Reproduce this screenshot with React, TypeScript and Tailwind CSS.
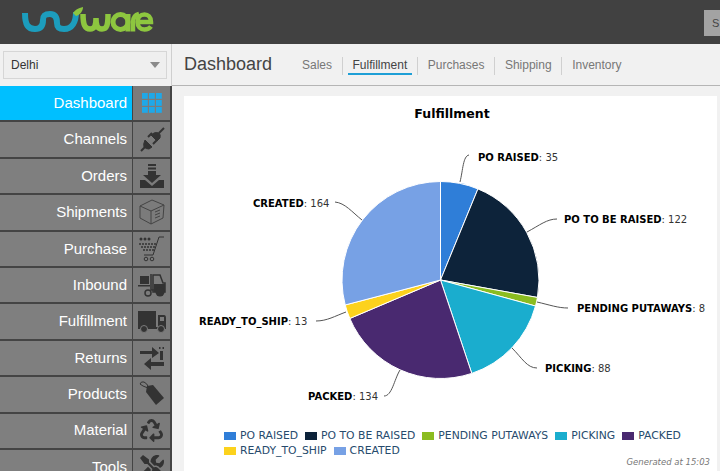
import type { ReactNode } from 'react';
import { FaRecycle, FaTools } from 'react-icons/fa';

const slices = [
  { name: 'PO RAISED', value: 35, color: '#2f7ed8' },
  { name: 'PO TO BE RAISED', value: 122, color: '#0d233a' },
  { name: 'PENDING PUTAWAYS', value: 8, color: '#8bbc21' },
  { name: 'PICKING', value: 88, color: '#1aadce' },
  { name: 'PACKED', value: 134, color: '#492970' },
  { name: 'READY_TO_SHIP', value: 13, color: '#fcd21d' },
  { name: 'CREATED', value: 164, color: '#77a1e5' },
];

// label position + leader line, in page coordinates
const labels = [
  { name: 'PO RAISED', value: 35, x: 478, y: 161, line: 'M460 182 C463 170 463 156 469 155' },
  { name: 'PO TO BE RAISED', value: 122, x: 564, y: 223, line: 'M527 232 C540 225 547 219 557 219' },
  { name: 'PENDING PUTAWAYS', value: 8, x: 577, y: 312, line: 'M537 302 C550 305 558 308 568 308' },
  { name: 'PICKING', value: 88, x: 545, y: 372, line: 'M512 348 C522 358 527 368 537 368' },
  { name: 'PACKED', value: 134, x: 308, y: 400, line: 'M400 370 C394 380 392 396 384 396' },
  { name: 'READY_TO_SHIP', value: 13, x: 199, y: 325, line: 'M346 312 C335 316 327 321 316 321' },
  { name: 'CREATED', value: 164, x: 253, y: 207, line: 'M362 220 C352 212 345 203 335 202' },
];

function slicePath(start: number, end: number) {
  const cx = 440.5;
  const cy = 280;
  const r = 98.5;
  const a0 = (start - 0.25) * Math.PI * 2;
  const a1 = (end - 0.25) * Math.PI * 2;
  const large = end - start > 0.5 ? 1 : 0;
  return `M${cx} ${cy} L${cx + r * Math.cos(a0)} ${cy + r * Math.sin(a0)} A${r} ${r} 0 ${large} 1 ${cx + r * Math.cos(a1)} ${cy + r * Math.sin(a1)} Z`;
}

function PieChart() {
  const total = slices.reduce((sum, s) => sum + s.value, 0);
  let acc = 0;
  return (
    <svg viewBox="184 126 533 302" className="h-[302px] w-[533px] shrink-0">
      {slices.map((s) => {
        const start = acc / total;
        acc += s.value;
        return <path key={s.name} d={slicePath(start, acc / total)} fill={s.color} stroke="#fff" strokeWidth="1" />;
      })}
      {labels.map((l) => (
        <g key={l.name}>
          <path d={l.line} fill="none" stroke="#555" strokeWidth="1" />
          <text x={l.x} y={l.y} fontSize="10" fontFamily="'DejaVu Sans', sans-serif" fill="#333">
            <tspan fontWeight="700" fill="#000">{l.name}</tspan>: {l.value}
          </text>
        </g>
      ))}
    </svg>
  );
}

const ic = 'h-[26px] w-[26px] text-[#333]';

const icons: Record<string, ReactNode> = {
  Dashboard: (
    <svg viewBox="0 0 20 20" className="h-5 w-5" fill="#1fa8e8">
      {[0, 7, 14].map((y) =>
        [0, 7, 14].map((x) => <rect key={`${x}-${y}`} x={x} y={y} width="5.8" height="5.8" />),
      )}
    </svg>
  ),
  Channels: (
    <svg viewBox="0 0 26 26" className={ic} fill="currentColor" stroke="currentColor">
      <path d="M2 24 L8 18" strokeWidth="2" />
      <path d="M6 13 L13 20 L10 22 Q7 22 5 20 Q4 17 6 13Z" />
      <path d="M12 8 L18 14 L21 11 Q22 8 20 6 Q17 5 15 6Z" />
      <path d="M9 10 L13 6 M14 17 L18 13" strokeWidth="2" />
      <path d="M20 6 L25 1" strokeWidth="2" />
    </svg>
  ),
  Orders: (
    <svg viewBox="0 0 26 26" className={ic} fill="currentColor">
      <rect x="9" y="1" width="8" height="2" />
      <rect x="9" y="4.5" width="8" height="2" />
      <path d="M9 8h8v4h5l-9 8-9-8h5z" />
      <path d="M1 17h5l7 6 7-6h5v8H1z" />
    </svg>
  ),
  Shipments: (
    <svg viewBox="0 0 26 26" className="h-[26px] w-[26px] text-[#444]" fill="none" stroke="currentColor" strokeWidth="1">
      <path d="M13 1 L25 6 L24 19 L12 25 L1 19 L1 7 Z" />
      <path d="M1 7 L12 12 L25 6 M12 12 L12 25" />
      <path d="M16 13 L21 11 M16 16 L21 14 M16 19 L21 17" />
    </svg>
  ),
  Purchase: (
    <svg viewBox="0 0 26 26" className={ic} fill="currentColor">
      {[2, 6, 10].map((x) => <circle key={x} cx={x} cy="3" r="1.5" />)}
      {[1, 4, 7, 10, 13, 16].map((x) => <circle key={x} cx={x} cy="8" r="1" />)}
      {[3, 6, 9, 12, 15].map((x) => <circle key={x} cx={x} cy="11" r="1" />)}
      {[5, 8, 11, 14].map((x) => <circle key={x} cx={x} cy="14" r="1" />)}
      <path d="M25 1 H20 L14 19 H5" fill="none" stroke="currentColor" strokeWidth="1" />
      <circle cx="7" cy="23" r="1.8" fill="none" stroke="currentColor" />
      <circle cx="13" cy="23" r="1.8" fill="none" stroke="currentColor" />
    </svg>
  ),
  Inbound: (
    <svg viewBox="0 0 28 26" className="h-[26px] w-7 text-[#333]" fill="currentColor">
      <rect x="2" y="4" width="9" height="8" />
      <rect x="0" y="13" width="12" height="1.5" />
      <path d="M13 2 V18 H17" fill="none" stroke="currentColor" strokeWidth="1.5" />
      <path d="M15 3 H22 L25 11 H27 V20 H15Z" fill="none" stroke="currentColor" strokeWidth="1.5" />
      <path d="M16 12 H27 V20 H16Z" />
      <circle cx="10" cy="21" r="3" fill="none" stroke="currentColor" strokeWidth="1.5" />
      <circle cx="22" cy="20" r="4.5" />
    </svg>
  ),
  Fulfillment: (
    <svg viewBox="0 0 28 24" className="h-6 w-7 text-[#333]" fill="currentColor">
      <rect x="0" y="1" width="18" height="16" />
      <path d="M20 5 H26 Q28 5 28 8 V17 H20Z" />
      <rect x="22" y="7" width="4" height="4" fill="#7b7b7b" />
      <rect x="0" y="17" width="28" height="2" />
      <circle cx="6" cy="19" r="3.5" stroke="#7b7b7b" />
      <circle cx="23" cy="19" r="3.5" stroke="#7b7b7b" />
    </svg>
  ),
  Returns: (
    <svg viewBox="0 0 26 26" className={ic} fill="currentColor">
      <path d="M1 6 H13 V2 L20 8 L13 13 V9 H1Z" />
      <path d="M25 17 H12 V13 L5 19 L12 25 V21 H25Z" />
      <rect x="21" y="6" width="3" height="9" />
      <rect x="20" y="2" width="1.5" height="2" />
      <rect x="23.5" y="2" width="1.5" height="2" />
    </svg>
  ),
  Products: (
    <svg viewBox="0 0 26 26" className={ic} fill="currentColor">
      <path d="M8 5 L14 4 L25 17 L17 24 L7 11 Z" />
      <path d="M9 7 Q3 5 1 3 Q2 0 5 1 Q8 2 10 7" fill="none" stroke="currentColor" strokeWidth="1" />
    </svg>
  ),
  Material: <FaRecycle className="h-[23px] w-[23px] text-[#333]" />,
  Tools: <FaTools className="h-6 w-6 text-[#333]" />,
};

const navItems = ['Dashboard', 'Channels', 'Orders', 'Shipments', 'Purchase', 'Inbound', 'Fulfillment', 'Returns', 'Products', 'Material', 'Tools'];
const tabs = ['Sales', 'Fulfillment', 'Purchases', 'Shipping', 'Inventory'];

function Logo() {
  return (
    <svg viewBox="20 6 136 28" className="h-7 w-[136px]" fill="none" strokeWidth="6">
      <path d="M25 13 C25 25 28 29 35 29 C41 29 43 25 43 20 C43 15 46 14 50 14 C56 14 57 19 57 23 C57 27 59 29 64 29 C72 29 76 22 76 12" stroke="#1c9dbd" />
      <path d="M73 13 C75 10 78 8 83 7 C83 11 80 15 76 16Z" fill="#8dc63f" strokeWidth="0" />
      <path d="M83 14 C83 25 85 29 90 29 C95 29 96 25 96 18 C96 25 97 29 102 29 C107 29 108 25 108 14" stroke="#8dc63f" strokeWidth="5.5" />
      <circle cx="120.5" cy="22" r="7.5" stroke="#8dc63f" strokeWidth="5" />
      <path d="M128 14 V31.5" stroke="#8dc63f" strokeWidth="5" />
      <path d="M133 31.5 V22 C133 17 135 15 139 14" stroke="#8dc63f" strokeWidth="4.5" />
      <path d="M137.5 22 H151 C151 17 148 14.5 144.5 14.5 C140.5 14.5 137.5 17.5 137.5 22 C137.5 26.5 140.5 29.5 144.5 29.5 C147 29.5 149.5 28.5 151 26.5" stroke="#8dc63f" strokeWidth="4.5" />
    </svg>
  );
}

export default function App() {
  return (
    <div className="flex h-[471px] w-[720px] flex-col overflow-hidden bg-[#f1f1f1] font-['Liberation_Sans',sans-serif]">
      <header className="flex h-11 shrink-0 items-start justify-between bg-[#414141]">
        <div className="pl-5 pt-[6px]">
          <Logo />
        </div>
        <div className="mt-[10px] flex h-[26px] w-4 items-center bg-[#a3a3a3] pl-2 text-[11px] leading-none text-[#444]">S</div>
      </header>

      <div className="flex min-h-0 flex-1">
        <aside className="flex w-[172px] shrink-0 flex-col">
          <div className="flex h-[42px] shrink-0 items-center border-r border-[#cfcfcf] pl-[3px]">
            <div className="flex h-7 w-[164px] items-center justify-between border border-[#d6d6d6] bg-[#efefef] pl-[7px] pr-[6px] text-xs text-[#333]">
              <span>Delhi</span>
              <span className="h-0 w-0 border-x-[5px] border-t-[6px] border-x-transparent border-t-[#8a8a8a]" />
            </div>
          </div>
          <nav className="flex flex-col">
            {navItems.map((item) => (
              <div key={item} className="flex h-[36.4px] shrink-0 border-b-2 border-r-2 border-[#444]">
                <div className={`flex flex-1 items-center justify-end pr-[5px] text-[15px] text-white ${item === 'Dashboard' ? 'bg-[#00bfff]' : 'bg-[#7f7f7f]'}`}>
                  {item}
                </div>
                <div className="flex w-[38px] shrink-0 items-center justify-center border-l border-[#444] bg-[#7b7b7b]">
                  {icons[item]}
                </div>
              </div>
            ))}
          </nav>
        </aside>

        <main className="flex min-w-0 flex-1 flex-col">
          <div className="flex h-[42px] shrink-0 items-center border-b border-[#b5b5b5] pl-3">
            <h1 className="mb-[2px] w-[108px] text-lg text-[#444]">Dashboard</h1>
            <div className="mt-[3px] flex h-[18px] items-start">
              {tabs.map((tab, i) => (
                <div key={tab} className={`h-full pl-[10px] pr-[9.5px] text-xs leading-[17px] text-[#777] ${i < tabs.length - 1 ? 'border-r border-[#d0d0d0]' : ''}`}>
                  <span className={tab === 'Fulfillment' ? 'relative inline-block text-[#444] after:absolute after:-inset-x-[5px] after:-bottom-px after:h-[2px] after:bg-[#1e9fd6]' : ''}>{tab}</span>
                </div>
              ))}
            </div>
          </div>

          <div className="flex min-h-0 flex-1 pl-3 pr-[3px] pt-[10px]">
            <section className="flex w-[533px] flex-col overflow-hidden bg-white font-['DejaVu_Sans',sans-serif]">
              <h2 className="h-[30px] shrink-0 pl-[3px] pt-[9px] text-center text-[12.5px] font-bold leading-[18px] text-black">Fulfillment</h2>
              <PieChart />
              <ul className="flex flex-wrap pl-10 pr-6 text-[10.8px] leading-[15px] text-[#274b6d]">
                {slices.map((s) => (
                  <li key={s.name} className="mr-[7px] flex items-center">
                    <span className="mr-1 h-2 w-3" style={{ backgroundColor: s.color }} />
                    {s.name}
                  </li>
                ))}
              </ul>
              <p className="-mt-px pr-[7px] text-right text-[8.5px] italic leading-[11px] text-[#777]">Generated at 15:03</p>
            </section>
          </div>
        </main>
      </div>
    </div>
  );
}
